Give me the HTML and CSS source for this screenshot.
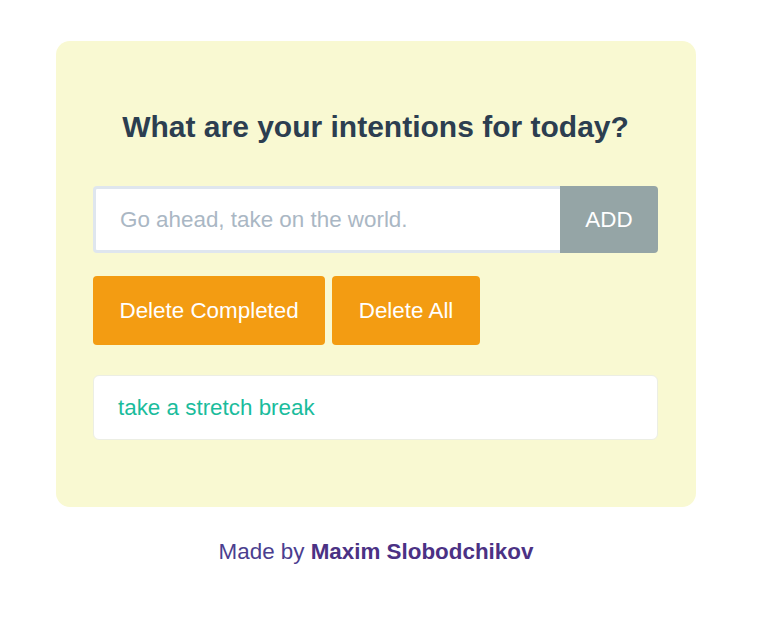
FILE: index.html
```html
<!DOCTYPE html>
<html>
<head>
<meta charset="utf-8">
<link rel="stylesheet" href="styles.css">
</head>
<body>
<div class="wrap">
  <div class="card">
    <h1 class="title">What are your intentions for today?</h1>
    <form class="add-form">
      <input class="add-input" type="text" placeholder="Go ahead, take on the world.">
      <button class="add-btn" type="button">ADD</button>
    </form>
    <div class="actions">
      <button class="action-btn" type="button">Delete Completed</button>
      <button class="action-btn" type="button">Delete All</button>
    </div>
    <ul class="list">
      <li class="item">take a stretch break</li>
    </ul>
  </div>
  <p class="footer">Made by <strong class="author">Maxim Slobodchikov</strong></p>
</div>
</body>
</html>
```
FILE: styles.css
```css
html, body {
  margin: 0;
  padding: 0;
  background: #ffffff;
  font-family: "Liberation Sans", Arial, sans-serif;
}
.wrap {
  width: 640px;
  margin-left: 56px;
  padding-top: 41px;
}
.card {
  background: #f9f9d2;
  border-radius: 14px;
  padding: 68px 38px 67px 37px;
  display: flex;
  flex-direction: column;
}
.title {
  margin: 0 0 42px;
  font-size: 30px;
  line-height: 35px;
  font-weight: bold;
  color: #2c3e50;
  text-align: center;
}
.add-form {
  display: flex;
  margin: 0 0 23px;
  height: 67px;
}
.add-input {
  flex: 1;
  min-width: 0;
  box-sizing: border-box;
  height: 67px;
  border: 3px solid #dfe6ee;
  border-right: none;
  border-radius: 4px 0 0 4px;
  background: #ffffff;
  padding: 0 24px;
  font-family: "Liberation Sans", Arial, sans-serif;
  font-size: 22.4px;
  color: #2c3e50;
  outline: none;
}
.add-input::placeholder {
  color: #aab7c4;
}
.add-btn {
  width: 98px;
  height: 67px;
  border: none;
  border-radius: 0 4px 4px 0;
  background: #95a5a6;
  color: #ffffff;
  font-family: "Liberation Sans", Arial, sans-serif;
  font-size: 22.4px;
  padding: 0;
}
.actions {
  display: flex;
  gap: 7px;
  margin: 0 0 30px;
}
.action-btn {
  height: 69px;
  border: none;
  border-radius: 4px;
  background: #f39c12;
  color: #ffffff;
  font-family: "Liberation Sans", Arial, sans-serif;
  font-size: 22.4px;
  padding: 0 26.5px;
}
.list {
  list-style: none;
  margin: 0;
  padding: 0;
}
.item {
  box-sizing: border-box;
  height: 65px;
  display: flex;
  align-items: center;
  background: #ffffff;
  border: 1px solid #eceee4;
  border-radius: 6px;
  padding: 0 24px;
  font-size: 22.4px;
  color: #1abc9c;
}
.footer {
  margin: 32px 0 0;
  text-align: center;
  font-size: 22.4px;
  line-height: 26px;
  color: #4b3e8f;
}
.author {
  font-weight: bold;
  color: #4b3184;
}
```
